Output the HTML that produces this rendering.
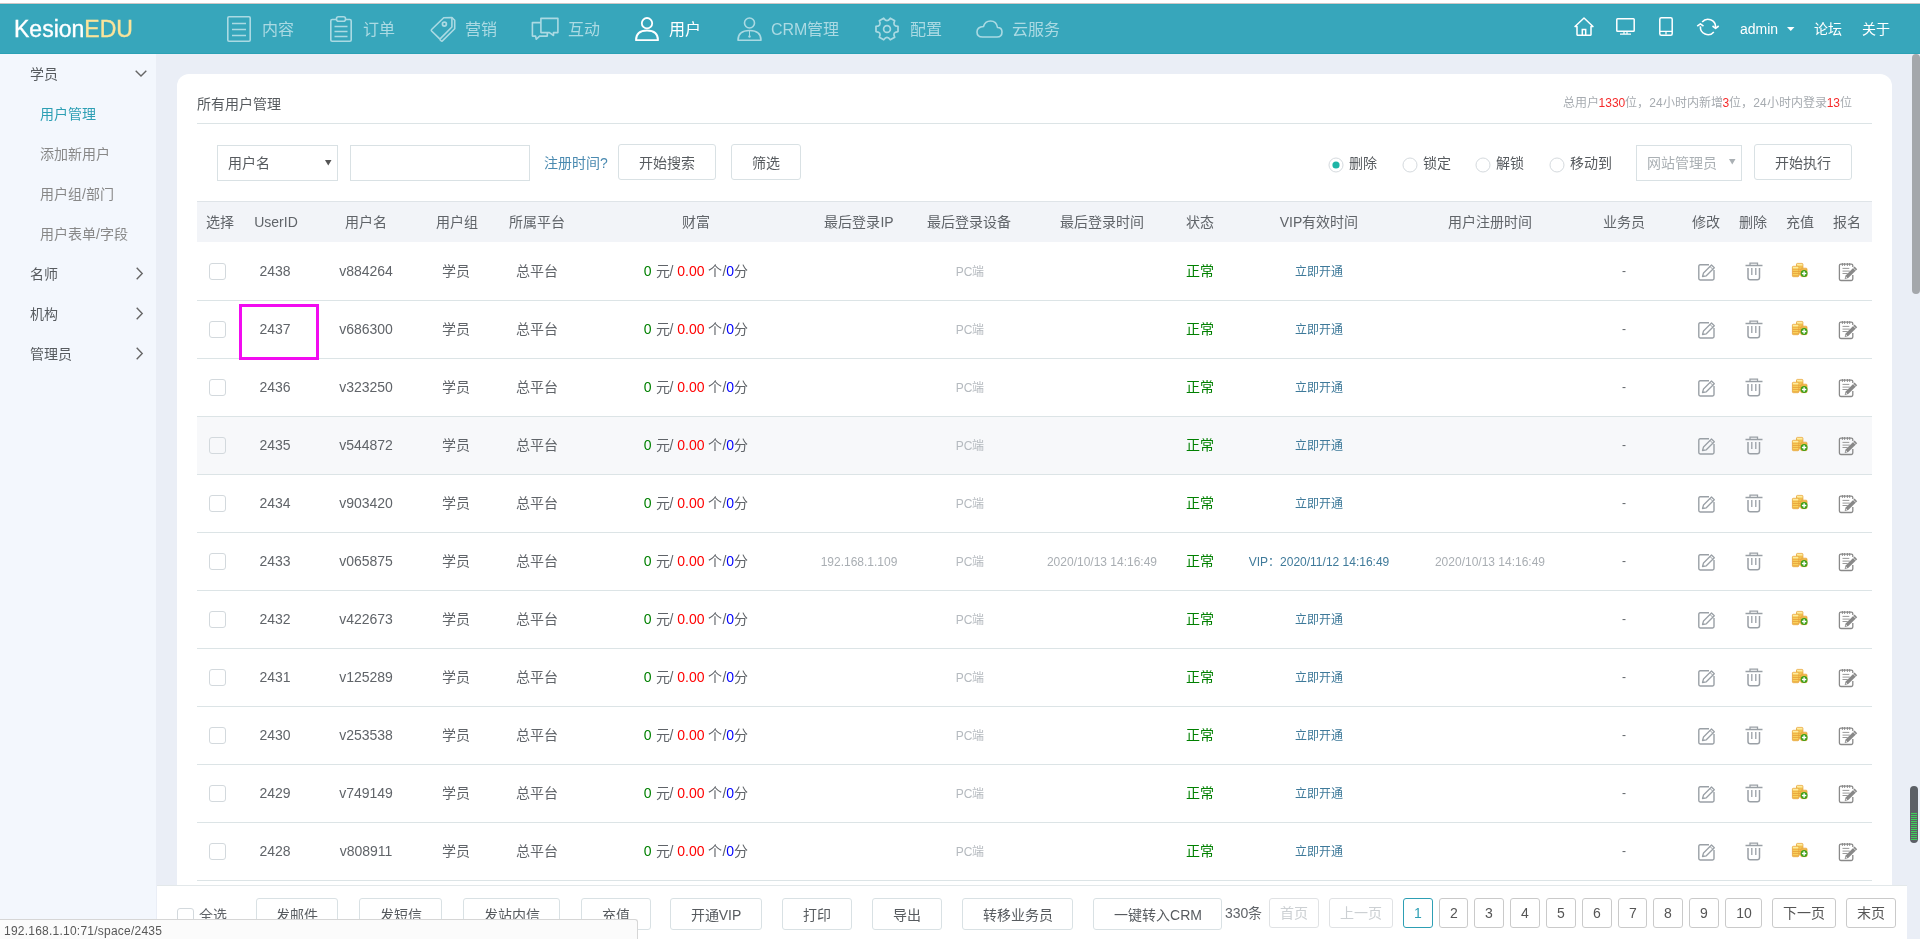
<!DOCTYPE html><html lang="zh-CN"><head><meta charset="utf-8"><style>
html,body{margin:0;padding:0;width:1920px;height:939px;overflow:hidden;background:#eaeef6;font-family:"Liberation Sans", sans-serif;}
.t{position:absolute;white-space:nowrap;-webkit-font-smoothing:antialiased;will-change:transform}
.r{position:absolute;box-sizing:border-box;}
svg{position:absolute;overflow:visible}
</style></head><body>
<div class="r" style="left:0px;top:0px;width:1920px;height:3px;background:#fff"></div>
<div class="r" style="left:0px;top:3px;width:1920px;height:1px;background:#cdc6c6"></div>
<div class="r" style="left:0px;top:4px;width:1920px;height:50px;background:#37a6bb"></div>
<div class="r" style="left:0px;top:4px;width:1920px;height:1px;background:#2ca7ba"></div>
<div class="r" style="left:0px;top:53px;width:1920px;height:1px;background:#2ba1b5"></div>
<div class="r" style="left:0px;top:54px;width:156px;height:885px;background:#f3f7fd"></div>
<div class="t" style="left:14px;top:14px;font-size:23px;line-height:30px;color:#fff;-webkit-text-stroke:0.35px #fff">Kesion<span style="color:#fce49a;-webkit-text-stroke:0.35px #fce49a">EDU</span></div>
<svg style="left:227px;top:16px" width="24" height="26" viewBox="0 0 24 26"><rect x="0.8" y="0.8" width="22.4" height="24.4" rx="1.2" fill="none" stroke="#abdae3" stroke-width="1.6"/><path d="M5 7.5H19M5 13.5H19M5 19.5H19" stroke="#abdae3" stroke-width="1.6"/></svg>
<div class="t" style="left:262px;top:10.0px;font-size:16px;line-height:40px;color:#abdae3;">内容</div>
<svg style="left:330px;top:16px" width="22" height="26" viewBox="0 0 22 26"><path d="M6 3.5H2.2Q0.8 3.5 0.8 5V24Q0.8 25.2 2.2 25.2H19.8Q21.2 25.2 21.2 24V5Q21.2 3.5 19.8 3.5H16" fill="none" stroke="#abdae3" stroke-width="1.6"/><rect x="6.5" y="0.8" width="9" height="4.5" rx="2" fill="none" stroke="#abdae3" stroke-width="1.6"/><path d="M4.5 10.5H17.5M4.5 15.5H17.5M4.5 20.5H17.5" stroke="#abdae3" stroke-width="1.6"/></svg>
<div class="t" style="left:363px;top:10.0px;font-size:16px;line-height:40px;color:#abdae3;">订单</div>
<svg style="left:426px;top:12px" width="34" height="34" viewBox="0 0 34 34"><path d="M5.6 17.5L17.7 5.7L25.9 5.5V15L14.6 26.4Q13.9 27.1 13.2 26.4L5.6 19Q4.9 18.2 5.6 17.5Z" fill="none" stroke="#abdae3" stroke-width="1.6" stroke-linejoin="round"/><path d="M25.9 5.5L28.7 8.3V16.8L16.4 28.9Q15.7 29.5 15 28.8L13.6 27.3" fill="none" stroke="#abdae3" stroke-width="1.6" stroke-linejoin="round"/><circle cx="18.4" cy="12.1" r="2" fill="none" stroke="#abdae3" stroke-width="1.7"/></svg>
<div class="t" style="left:465px;top:10.0px;font-size:16px;line-height:40px;color:#abdae3;">营销</div>
<svg style="left:530px;top:16px" width="30" height="26" viewBox="0 0 30 26"><path d="M10.9 2.4H27.9V16.6H23.5V19.5L19.5 16.6H10.9Z" fill="none" stroke="#abdae3" stroke-width="1.6" stroke-linejoin="round"/><path d="M10.9 6.6H2.4V20.1H5.6L6.3 23.3L9.6 20.1H17.3V16.6" fill="none" stroke="#abdae3" stroke-width="1.6" stroke-linejoin="round"/></svg>
<div class="t" style="left:568px;top:10.0px;font-size:16px;line-height:40px;color:#abdae3;">互动</div>
<svg style="left:635px;top:17px" width="24" height="24" viewBox="0 0 24 24"><circle cx="12" cy="6.2" r="5.2" fill="none" stroke="#fff" stroke-width="1.8"/><path d="M1 23.2Q1 13.5 12 13.5Q23 13.5 23 23.2Z" fill="none" stroke="#fff" stroke-width="1.8" stroke-linejoin="round"/></svg>
<div class="t" style="left:669px;top:10.0px;font-size:16px;line-height:40px;color:#fff;">用户</div>
<svg style="left:737px;top:17px" width="25" height="24" viewBox="0 0 25 24"><circle cx="12.5" cy="6" r="5" fill="none" stroke="#abdae3" stroke-width="1.6"/><path d="M1 23.2Q1 13.5 12.5 13.5Q24 13.5 24 23.2Z" fill="none" stroke="#abdae3" stroke-width="1.6" stroke-linejoin="round"/><path d="M12.5 13.5V19" stroke="#abdae3" stroke-width="1"/><circle cx="12.5" cy="19.5" r="1.2" fill="#abdae3"/></svg>
<div class="t" style="left:771px;top:10.0px;font-size:16px;line-height:40px;color:#abdae3;">CRM管理</div>
<svg style="left:875px;top:17px" width="24" height="24" viewBox="0 0 24 24"><path d="M23.01 9.46L23.01 14.54Q17.11 14.95 19.71 20.26L15.30 22.81Q12.00 17.90 8.70 22.81L4.29 20.26Q6.89 14.95 0.99 14.54L0.99 9.46Q6.89 9.05 4.29 3.74L8.70 1.19Q12.00 6.10 15.30 1.19L19.71 3.74Q17.11 9.05 23.01 9.46Z" fill="none" stroke="#abdae3" stroke-width="1.7" stroke-linejoin="round"/><circle cx="12" cy="12" r="3.4" fill="none" stroke="#abdae3" stroke-width="1.7"/></svg>
<div class="t" style="left:910px;top:10.0px;font-size:16px;line-height:40px;color:#abdae3;">配置</div>
<svg style="left:976px;top:20px" width="27" height="18" viewBox="0 0 27 18"><path d="M6.5 17H21Q26 17 26 12Q26 7.5 21.5 7.5Q20.5 1 14.5 1Q9 1 7.5 6.5Q1 7 1 12Q1 17 6.5 17Z" fill="none" stroke="#abdae3" stroke-width="1.6" stroke-linejoin="round"/></svg>
<div class="t" style="left:1012px;top:10.0px;font-size:16px;line-height:40px;color:#abdae3;">云服务</div>
<svg style="left:1574px;top:17px" width="20" height="19" viewBox="0 0 20 19"><path d="M1 9.5L10 1L19 9.5H17V17.8Q17 18.2 16.6 18.2H3.4Q3 18.2 3 17.8V9.5Z" fill="none" stroke="#fff" stroke-width="1.5" stroke-linejoin="round"/><path d="M8.3 18V12.5H11.7V18" fill="none" stroke="#fff" stroke-width="1.5"/></svg>
<svg style="left:1616px;top:18px" width="19" height="17" viewBox="0 0 19 17"><rect x="0.8" y="0.8" width="17.4" height="12.4" rx="0.8" fill="none" stroke="#fff" stroke-width="1.5"/><path d="M8 13.5V16M11 13.5V16M4 16.2H15" stroke="#fff" stroke-width="1.2"/></svg>
<svg style="left:1659px;top:17px" width="14" height="19" viewBox="0 0 14 19"><rect x="0.8" y="0.8" width="12.4" height="17.4" rx="1.5" fill="none" stroke="#fff" stroke-width="1.5"/><path d="M1 14.3H13M7 14.3V17.5" stroke="#fff" stroke-width="1.2"/></svg>
<svg style="left:1692px;top:14px" width="32" height="26" viewBox="0 0 32 26"><path d="M10.18 8.11A7.6 7.6 0 0 1 23.6 13" fill="none" stroke="#fff" stroke-width="1.6"/><path d="M20.5 12L23.6 14.4L26.7 12" fill="none" stroke="#fff" stroke-width="1.6" stroke-linejoin="round"/><path d="M21.82 17.89A7.6 7.6 0 0 1 8.43 12.34" fill="none" stroke="#fff" stroke-width="1.6"/><path d="M5.2 12.2L8.4 9.8L11.5 12.2" fill="none" stroke="#fff" stroke-width="1.6" stroke-linejoin="round"/></svg>
<div class="t" style="left:1740px;top:9.0px;font-size:14px;line-height:40px;color:#fff;">admin</div>
<svg style="left:1787px;top:27px" width="8" height="4" viewBox="0 0 8 4"><path d="M0 0H7.5L3.75 4Z" fill="#fff"/></svg>
<div class="t" style="left:1814px;top:9.0px;font-size:14px;line-height:40px;color:#fff;">论坛</div>
<div class="t" style="left:1862px;top:9.0px;font-size:14px;line-height:40px;color:#fff;">关于</div>
<div class="t" style="left:30px;top:54.0px;font-size:14px;line-height:40px;color:#575b5f;">学员</div>
<svg style="left:135px;top:70px" width="12" height="7" viewBox="0 0 12 7"><path d="M0.7 0.7L6 6L11.3 0.7" fill="none" stroke="#666" stroke-width="1.4"/></svg>
<div class="t" style="left:40px;top:94.0px;font-size:14px;line-height:40px;color:#2d9fb4;">用户管理</div>
<div class="t" style="left:40px;top:134.0px;font-size:14px;line-height:40px;color:#888;">添加新用户</div>
<div class="t" style="left:40px;top:174.0px;font-size:14px;line-height:40px;color:#888;">用户组/部门</div>
<div class="t" style="left:40px;top:214.0px;font-size:14px;line-height:40px;color:#888;">用户表单/字段</div>
<div class="t" style="left:30px;top:254.0px;font-size:14px;line-height:40px;color:#575b5f;">名师</div>
<svg style="left:136px;top:267px" width="7" height="13" viewBox="0 0 7 13"><path d="M0.7 0.7L6.2 6.5L0.7 12.3" fill="none" stroke="#666" stroke-width="1.4"/></svg>
<div class="t" style="left:30px;top:294.0px;font-size:14px;line-height:40px;color:#575b5f;">机构</div>
<svg style="left:136px;top:307px" width="7" height="13" viewBox="0 0 7 13"><path d="M0.7 0.7L6.2 6.5L0.7 12.3" fill="none" stroke="#666" stroke-width="1.4"/></svg>
<div class="t" style="left:30px;top:334.0px;font-size:14px;line-height:40px;color:#575b5f;">管理员</div>
<svg style="left:136px;top:347px" width="7" height="13" viewBox="0 0 7 13"><path d="M0.7 0.7L6.2 6.5L0.7 12.3" fill="none" stroke="#666" stroke-width="1.4"/></svg>
<div class="r" style="left:177px;top:74px;width:1715px;height:900px;background:#fff;border-radius:12px"></div>
<div class="t" style="left:197px;top:84.0px;font-size:14px;line-height:40px;color:#575b5f;">所有用户管理</div>
<div class="t" style="left:1052px;top:93px;width:800px;text-align:right;font-size:12px;line-height:20px;color:#a6abb0">总用户<span style="color:#f52a2a">1330</span>位，24小时内新增<span style="color:#f52a2a">3</span>位，24小时内登录<span style="color:#f52a2a">13</span>位</div>
<div class="r" style="left:197px;top:123px;width:1675px;height:1px;background:#dce4e6"></div>
<div class="r" style="left:217px;top:145px;width:121px;height:36px;border:1px solid #d9e1e4;background:#fff"></div>
<div class="t" style="left:228px;top:143.0px;font-size:14px;line-height:40px;color:#575b5f;">用户名</div>
<svg style="left:325px;top:160px" width="7" height="6" viewBox="0 0 7 6"><path d="M0 0H6.5L3.25 5.5Z" fill="#555"/></svg>
<div class="r" style="left:350px;top:145px;width:180px;height:36px;border:1px solid #d9e1e4;background:#fff"></div>
<div class="t" style="left:544px;top:143.0px;font-size:14px;line-height:40px;color:#4a8ab0;">注册时间?</div>
<div class="r" style="left:618px;top:144px;width:98px;height:36px;border:1px solid #d9e1e4;border-radius:3px;background:#fff;"></div>
<div class="t" style="left:367.0px;top:142.5px;width:600px;text-align:center;font-size:14px;line-height:40px;color:#575b5f;">开始搜索</div>
<div class="r" style="left:731px;top:144px;width:70px;height:36px;border:1px solid #d9e1e4;border-radius:3px;background:#fff;"></div>
<div class="t" style="left:466.0px;top:142.5px;width:600px;text-align:center;font-size:14px;line-height:40px;color:#575b5f;">筛选</div>
<svg style="left:1327.5px;top:156.5px" width="16" height="16" viewBox="0 0 16 16"><circle cx="8" cy="8" r="7" fill="#fff" stroke="#d5dade" stroke-width="1"/><circle cx="8" cy="8" r="3.6" fill="#1eb5a6"/></svg>
<div class="t" style="left:1349px;top:143.0px;font-size:14px;line-height:40px;color:#575b5f;">删除</div>
<svg style="left:1401.5px;top:156.5px" width="16" height="16" viewBox="0 0 16 16"><circle cx="8" cy="8" r="7" fill="#fff" stroke="#d5dade" stroke-width="1"/></svg>
<div class="t" style="left:1423px;top:143.0px;font-size:14px;line-height:40px;color:#575b5f;">锁定</div>
<svg style="left:1474.5px;top:156.5px" width="16" height="16" viewBox="0 0 16 16"><circle cx="8" cy="8" r="7" fill="#fff" stroke="#d5dade" stroke-width="1"/></svg>
<div class="t" style="left:1496px;top:143.0px;font-size:14px;line-height:40px;color:#575b5f;">解锁</div>
<svg style="left:1548.5px;top:156.5px" width="16" height="16" viewBox="0 0 16 16"><circle cx="8" cy="8" r="7" fill="#fff" stroke="#d5dade" stroke-width="1"/></svg>
<div class="t" style="left:1570px;top:143.0px;font-size:14px;line-height:40px;color:#575b5f;">移动到</div>
<div class="r" style="left:1636px;top:145px;width:106px;height:36px;border:1px solid #d9e1e4;background:#fff"></div>
<div class="t" style="left:1647px;top:143.0px;font-size:14px;line-height:40px;color:#aab0b4;">网站管理员</div>
<svg style="left:1729px;top:159px" width="7" height="6" viewBox="0 0 7 6"><path d="M0 0H6.5L3.25 5.5Z" fill="#aab0b4"/></svg>
<div class="r" style="left:1754px;top:144px;width:98px;height:36px;border:1px solid #d9e1e4;border-radius:3px;background:#fff;"></div>
<div class="t" style="left:1503.0px;top:142.5px;width:600px;text-align:center;font-size:14px;line-height:40px;color:#575b5f;">开始执行</div>
<div class="r" style="left:197px;top:201px;width:1675px;height:41px;background:#f2f4f8;border-top:1px solid #dfe4e8"></div>
<div class="t" style="left:-80px;top:201.5px;width:600px;text-align:center;font-size:14px;line-height:40px;color:#606469;">选择</div>
<div class="t" style="left:-24.5px;top:201.5px;width:600px;text-align:center;font-size:14px;line-height:40px;color:#606469;">UserID</div>
<div class="t" style="left:66px;top:201.5px;width:600px;text-align:center;font-size:14px;line-height:40px;color:#606469;">用户名</div>
<div class="t" style="left:156.60000000000002px;top:201.5px;width:600px;text-align:center;font-size:14px;line-height:40px;color:#606469;">用户组</div>
<div class="t" style="left:237px;top:201.5px;width:600px;text-align:center;font-size:14px;line-height:40px;color:#606469;">所属平台</div>
<div class="t" style="left:396px;top:201.5px;width:600px;text-align:center;font-size:14px;line-height:40px;color:#606469;">财富</div>
<div class="t" style="left:559px;top:201.5px;width:600px;text-align:center;font-size:14px;line-height:40px;color:#606469;">最后登录IP</div>
<div class="t" style="left:669.4px;top:201.5px;width:600px;text-align:center;font-size:14px;line-height:40px;color:#606469;">最后登录设备</div>
<div class="t" style="left:801.8px;top:201.5px;width:600px;text-align:center;font-size:14px;line-height:40px;color:#606469;">最后登录时间</div>
<div class="t" style="left:900px;top:201.5px;width:600px;text-align:center;font-size:14px;line-height:40px;color:#606469;">状态</div>
<div class="t" style="left:1019px;top:201.5px;width:600px;text-align:center;font-size:14px;line-height:40px;color:#606469;">VIP有效时间</div>
<div class="t" style="left:1190px;top:201.5px;width:600px;text-align:center;font-size:14px;line-height:40px;color:#606469;">用户注册时间</div>
<div class="t" style="left:1323.8px;top:201.5px;width:600px;text-align:center;font-size:14px;line-height:40px;color:#606469;">业务员</div>
<div class="t" style="left:1406.3px;top:201.5px;width:600px;text-align:center;font-size:14px;line-height:40px;color:#606469;">修改</div>
<div class="t" style="left:1453.3px;top:201.5px;width:600px;text-align:center;font-size:14px;line-height:40px;color:#606469;">删除</div>
<div class="t" style="left:1500.3px;top:201.5px;width:600px;text-align:center;font-size:14px;line-height:40px;color:#606469;">充值</div>
<div class="t" style="left:1547.4px;top:201.5px;width:600px;text-align:center;font-size:14px;line-height:40px;color:#606469;">报名</div>
<div class="r" style="left:197px;top:300px;width:1675px;height:1px;background:#dce4e6"></div>
<div class="r" style="left:209px;top:263px;width:17px;height:17px;border:1px solid #d3d9dd;border-radius:3px;background:transparent"></div>
<div class="t" style="left:-24.600000000000023px;top:251.0px;width:600px;text-align:center;font-size:14px;line-height:40px;color:#606469;">2438</div>
<div class="t" style="left:66.39999999999998px;top:251.0px;width:600px;text-align:center;font-size:14px;line-height:40px;color:#606469;">v884264</div>
<div class="t" style="left:156px;top:251.0px;width:600px;text-align:center;font-size:14px;line-height:40px;color:#606469;">学员</div>
<div class="t" style="left:237px;top:251.0px;width:600px;text-align:center;font-size:14px;line-height:40px;color:#606469;">总平台</div>
<div class="t" style="left:396px;top:251.0px;width:600px;text-align:center;font-size:14px;line-height:40px;color:#606469;"><span style="color:#008000">0</span> 元/ <span style="color:#ff0000">0.00</span> 个/<span style="color:#0000ff">0</span>分</div>
<div class="t" style="left:669.5px;top:252.0px;width:600px;text-align:center;font-size:12px;line-height:40px;color:#b5babf;">PC端</div>
<div class="t" style="left:900px;top:251.0px;width:600px;text-align:center;font-size:14px;line-height:40px;color:#008000;">正常</div>
<div class="t" style="left:1019px;top:252.0px;width:600px;text-align:center;font-size:12px;line-height:40px;color:#3f7a9a;">立即开通</div>
<div class="t" style="left:1323.8px;top:251.0px;width:600px;text-align:center;font-size:12px;line-height:40px;color:#606469;">-</div>
<svg style="left:1698px;top:263.5px" width="18" height="17" viewBox="0 0 18 17"><path d="M11 0.8H2.2Q0.8 0.8 0.8 2.2V14.6Q0.8 16 2.2 16H14.6Q16 16 16 14.6V6" fill="none" stroke="#9aa0a6" stroke-width="1.4"/><path d="M4.5 12.5L5.5 9L13.5 1L16.3 3.8L8.3 11.8Z" fill="none" stroke="#9aa0a6" stroke-width="1.3" stroke-linejoin="round"/><path d="M12 2.5L14.8 5.3" stroke="#9aa0a6" stroke-width="1"/></svg>
<svg style="left:1745px;top:262px" width="18" height="19" viewBox="0 0 18 19"><path d="M0.5 3.5H17.5" stroke="#9aa0a6" stroke-width="1.5"/><path d="M5 3.5V1.2H12.5V3.5" fill="none" stroke="#9aa0a6" stroke-width="1.3"/><path d="M3 6V15.5Q3 17.8 5.3 17.8H12.2Q14.5 17.8 14.5 15.5V6" fill="none" stroke="#9aa0a6" stroke-width="1.5"/><path d="M6.8 6V13M10.8 6V13" stroke="#9aa0a6" stroke-width="1.3"/></svg>
<svg style="left:1792px;top:263px" width="16" height="15" viewBox="0 0 16 15"><defs><pattern id="cs271" width="4" height="2.2" patternUnits="userSpaceOnUse"><rect width="4" height="2.2" fill="#f9d45e"/><rect y="1.3" width="4" height="0.9" fill="#e9a43c"/></pattern></defs><rect x="4.5" y="0.4" width="6.4" height="11.4" rx="0.9" fill="url(#cs271)" stroke="#e6a13a" stroke-width="0.8"/><rect x="4.9" y="0.8" width="5.6" height="1.6" fill="#fdeca0"/><rect x="8.8" y="5.2" width="6.2" height="8.4" rx="0.9" fill="url(#cs271)" stroke="#e6a13a" stroke-width="0.8"/><rect x="0.4" y="3.3" width="6.4" height="10.4" rx="0.9" fill="url(#cs271)" stroke="#e6a13a" stroke-width="0.8"/><rect x="0.8" y="3.7" width="5.6" height="1.6" fill="#fdeca0"/><circle cx="12.1" cy="10.5" r="3.4" fill="#3a9e16"/><path d="M12.1 8.3V12.7M9.9 10.5H14.3" stroke="#fff" stroke-width="1.4"/></svg>
<svg style="left:1834px;top:258px" width="28" height="28" viewBox="0 0 28 28"><path d="M18.8 9V7.6Q18.8 6.2 17.4 6.2H6.8Q5.4 6.2 5.4 7.6V21.1Q5.4 22.5 6.8 22.5H17.4Q18.8 22.5 18.8 21.1V17" fill="none" stroke="#8a8a8a" stroke-width="1.3"/><path d="M8.4 5V7.9M10.6 5V7.9M13.4 5V7.9M15.7 5V7.9" stroke="#8a8a8a" stroke-width="1"/><path d="M8.5 10.4H15.3M8.5 13.1H15.8M8.5 15.5H13.7" stroke="#999" stroke-width="1"/><path d="M10.6 20.9L11.6 17.4L20.6 8.6L23.2 11.2L14.2 20Z" fill="#888"/><path d="M19.3 10L21.8 12.5" stroke="#fff" stroke-width="0.7"/><circle cx="12.3" cy="19.3" r="0.6" fill="#fff"/></svg>
<div class="r" style="left:197px;top:358px;width:1675px;height:1px;background:#dce4e6"></div>
<div class="r" style="left:209px;top:321px;width:17px;height:17px;border:1px solid #d3d9dd;border-radius:3px;background:transparent"></div>
<div class="t" style="left:-24.600000000000023px;top:309.0px;width:600px;text-align:center;font-size:14px;line-height:40px;color:#606469;">2437</div>
<div class="t" style="left:66.39999999999998px;top:309.0px;width:600px;text-align:center;font-size:14px;line-height:40px;color:#606469;">v686300</div>
<div class="t" style="left:156px;top:309.0px;width:600px;text-align:center;font-size:14px;line-height:40px;color:#606469;">学员</div>
<div class="t" style="left:237px;top:309.0px;width:600px;text-align:center;font-size:14px;line-height:40px;color:#606469;">总平台</div>
<div class="t" style="left:396px;top:309.0px;width:600px;text-align:center;font-size:14px;line-height:40px;color:#606469;"><span style="color:#008000">0</span> 元/ <span style="color:#ff0000">0.00</span> 个/<span style="color:#0000ff">0</span>分</div>
<div class="t" style="left:669.5px;top:310.0px;width:600px;text-align:center;font-size:12px;line-height:40px;color:#b5babf;">PC端</div>
<div class="t" style="left:900px;top:309.0px;width:600px;text-align:center;font-size:14px;line-height:40px;color:#008000;">正常</div>
<div class="t" style="left:1019px;top:310.0px;width:600px;text-align:center;font-size:12px;line-height:40px;color:#3f7a9a;">立即开通</div>
<div class="t" style="left:1323.8px;top:309.0px;width:600px;text-align:center;font-size:12px;line-height:40px;color:#606469;">-</div>
<svg style="left:1698px;top:321.5px" width="18" height="17" viewBox="0 0 18 17"><path d="M11 0.8H2.2Q0.8 0.8 0.8 2.2V14.6Q0.8 16 2.2 16H14.6Q16 16 16 14.6V6" fill="none" stroke="#9aa0a6" stroke-width="1.4"/><path d="M4.5 12.5L5.5 9L13.5 1L16.3 3.8L8.3 11.8Z" fill="none" stroke="#9aa0a6" stroke-width="1.3" stroke-linejoin="round"/><path d="M12 2.5L14.8 5.3" stroke="#9aa0a6" stroke-width="1"/></svg>
<svg style="left:1745px;top:320px" width="18" height="19" viewBox="0 0 18 19"><path d="M0.5 3.5H17.5" stroke="#9aa0a6" stroke-width="1.5"/><path d="M5 3.5V1.2H12.5V3.5" fill="none" stroke="#9aa0a6" stroke-width="1.3"/><path d="M3 6V15.5Q3 17.8 5.3 17.8H12.2Q14.5 17.8 14.5 15.5V6" fill="none" stroke="#9aa0a6" stroke-width="1.5"/><path d="M6.8 6V13M10.8 6V13" stroke="#9aa0a6" stroke-width="1.3"/></svg>
<svg style="left:1792px;top:321px" width="16" height="15" viewBox="0 0 16 15"><defs><pattern id="cs329" width="4" height="2.2" patternUnits="userSpaceOnUse"><rect width="4" height="2.2" fill="#f9d45e"/><rect y="1.3" width="4" height="0.9" fill="#e9a43c"/></pattern></defs><rect x="4.5" y="0.4" width="6.4" height="11.4" rx="0.9" fill="url(#cs329)" stroke="#e6a13a" stroke-width="0.8"/><rect x="4.9" y="0.8" width="5.6" height="1.6" fill="#fdeca0"/><rect x="8.8" y="5.2" width="6.2" height="8.4" rx="0.9" fill="url(#cs329)" stroke="#e6a13a" stroke-width="0.8"/><rect x="0.4" y="3.3" width="6.4" height="10.4" rx="0.9" fill="url(#cs329)" stroke="#e6a13a" stroke-width="0.8"/><rect x="0.8" y="3.7" width="5.6" height="1.6" fill="#fdeca0"/><circle cx="12.1" cy="10.5" r="3.4" fill="#3a9e16"/><path d="M12.1 8.3V12.7M9.9 10.5H14.3" stroke="#fff" stroke-width="1.4"/></svg>
<svg style="left:1834px;top:316px" width="28" height="28" viewBox="0 0 28 28"><path d="M18.8 9V7.6Q18.8 6.2 17.4 6.2H6.8Q5.4 6.2 5.4 7.6V21.1Q5.4 22.5 6.8 22.5H17.4Q18.8 22.5 18.8 21.1V17" fill="none" stroke="#8a8a8a" stroke-width="1.3"/><path d="M8.4 5V7.9M10.6 5V7.9M13.4 5V7.9M15.7 5V7.9" stroke="#8a8a8a" stroke-width="1"/><path d="M8.5 10.4H15.3M8.5 13.1H15.8M8.5 15.5H13.7" stroke="#999" stroke-width="1"/><path d="M10.6 20.9L11.6 17.4L20.6 8.6L23.2 11.2L14.2 20Z" fill="#888"/><path d="M19.3 10L21.8 12.5" stroke="#fff" stroke-width="0.7"/><circle cx="12.3" cy="19.3" r="0.6" fill="#fff"/></svg>
<div class="r" style="left:197px;top:416px;width:1675px;height:1px;background:#dce4e6"></div>
<div class="r" style="left:209px;top:379px;width:17px;height:17px;border:1px solid #d3d9dd;border-radius:3px;background:transparent"></div>
<div class="t" style="left:-24.600000000000023px;top:367.0px;width:600px;text-align:center;font-size:14px;line-height:40px;color:#606469;">2436</div>
<div class="t" style="left:66.39999999999998px;top:367.0px;width:600px;text-align:center;font-size:14px;line-height:40px;color:#606469;">v323250</div>
<div class="t" style="left:156px;top:367.0px;width:600px;text-align:center;font-size:14px;line-height:40px;color:#606469;">学员</div>
<div class="t" style="left:237px;top:367.0px;width:600px;text-align:center;font-size:14px;line-height:40px;color:#606469;">总平台</div>
<div class="t" style="left:396px;top:367.0px;width:600px;text-align:center;font-size:14px;line-height:40px;color:#606469;"><span style="color:#008000">0</span> 元/ <span style="color:#ff0000">0.00</span> 个/<span style="color:#0000ff">0</span>分</div>
<div class="t" style="left:669.5px;top:368.0px;width:600px;text-align:center;font-size:12px;line-height:40px;color:#b5babf;">PC端</div>
<div class="t" style="left:900px;top:367.0px;width:600px;text-align:center;font-size:14px;line-height:40px;color:#008000;">正常</div>
<div class="t" style="left:1019px;top:368.0px;width:600px;text-align:center;font-size:12px;line-height:40px;color:#3f7a9a;">立即开通</div>
<div class="t" style="left:1323.8px;top:367.0px;width:600px;text-align:center;font-size:12px;line-height:40px;color:#606469;">-</div>
<svg style="left:1698px;top:379.5px" width="18" height="17" viewBox="0 0 18 17"><path d="M11 0.8H2.2Q0.8 0.8 0.8 2.2V14.6Q0.8 16 2.2 16H14.6Q16 16 16 14.6V6" fill="none" stroke="#9aa0a6" stroke-width="1.4"/><path d="M4.5 12.5L5.5 9L13.5 1L16.3 3.8L8.3 11.8Z" fill="none" stroke="#9aa0a6" stroke-width="1.3" stroke-linejoin="round"/><path d="M12 2.5L14.8 5.3" stroke="#9aa0a6" stroke-width="1"/></svg>
<svg style="left:1745px;top:378px" width="18" height="19" viewBox="0 0 18 19"><path d="M0.5 3.5H17.5" stroke="#9aa0a6" stroke-width="1.5"/><path d="M5 3.5V1.2H12.5V3.5" fill="none" stroke="#9aa0a6" stroke-width="1.3"/><path d="M3 6V15.5Q3 17.8 5.3 17.8H12.2Q14.5 17.8 14.5 15.5V6" fill="none" stroke="#9aa0a6" stroke-width="1.5"/><path d="M6.8 6V13M10.8 6V13" stroke="#9aa0a6" stroke-width="1.3"/></svg>
<svg style="left:1792px;top:379px" width="16" height="15" viewBox="0 0 16 15"><defs><pattern id="cs387" width="4" height="2.2" patternUnits="userSpaceOnUse"><rect width="4" height="2.2" fill="#f9d45e"/><rect y="1.3" width="4" height="0.9" fill="#e9a43c"/></pattern></defs><rect x="4.5" y="0.4" width="6.4" height="11.4" rx="0.9" fill="url(#cs387)" stroke="#e6a13a" stroke-width="0.8"/><rect x="4.9" y="0.8" width="5.6" height="1.6" fill="#fdeca0"/><rect x="8.8" y="5.2" width="6.2" height="8.4" rx="0.9" fill="url(#cs387)" stroke="#e6a13a" stroke-width="0.8"/><rect x="0.4" y="3.3" width="6.4" height="10.4" rx="0.9" fill="url(#cs387)" stroke="#e6a13a" stroke-width="0.8"/><rect x="0.8" y="3.7" width="5.6" height="1.6" fill="#fdeca0"/><circle cx="12.1" cy="10.5" r="3.4" fill="#3a9e16"/><path d="M12.1 8.3V12.7M9.9 10.5H14.3" stroke="#fff" stroke-width="1.4"/></svg>
<svg style="left:1834px;top:374px" width="28" height="28" viewBox="0 0 28 28"><path d="M18.8 9V7.6Q18.8 6.2 17.4 6.2H6.8Q5.4 6.2 5.4 7.6V21.1Q5.4 22.5 6.8 22.5H17.4Q18.8 22.5 18.8 21.1V17" fill="none" stroke="#8a8a8a" stroke-width="1.3"/><path d="M8.4 5V7.9M10.6 5V7.9M13.4 5V7.9M15.7 5V7.9" stroke="#8a8a8a" stroke-width="1"/><path d="M8.5 10.4H15.3M8.5 13.1H15.8M8.5 15.5H13.7" stroke="#999" stroke-width="1"/><path d="M10.6 20.9L11.6 17.4L20.6 8.6L23.2 11.2L14.2 20Z" fill="#888"/><path d="M19.3 10L21.8 12.5" stroke="#fff" stroke-width="0.7"/><circle cx="12.3" cy="19.3" r="0.6" fill="#fff"/></svg>
<div class="r" style="left:197px;top:417px;width:1675px;height:57px;background:#f7f8fa"></div>
<div class="r" style="left:197px;top:474px;width:1675px;height:1px;background:#dce4e6"></div>
<div class="r" style="left:209px;top:437px;width:17px;height:17px;border:1px solid #d3d9dd;border-radius:3px;background:transparent"></div>
<div class="t" style="left:-24.600000000000023px;top:425.0px;width:600px;text-align:center;font-size:14px;line-height:40px;color:#606469;">2435</div>
<div class="t" style="left:66.39999999999998px;top:425.0px;width:600px;text-align:center;font-size:14px;line-height:40px;color:#606469;">v544872</div>
<div class="t" style="left:156px;top:425.0px;width:600px;text-align:center;font-size:14px;line-height:40px;color:#606469;">学员</div>
<div class="t" style="left:237px;top:425.0px;width:600px;text-align:center;font-size:14px;line-height:40px;color:#606469;">总平台</div>
<div class="t" style="left:396px;top:425.0px;width:600px;text-align:center;font-size:14px;line-height:40px;color:#606469;"><span style="color:#008000">0</span> 元/ <span style="color:#ff0000">0.00</span> 个/<span style="color:#0000ff">0</span>分</div>
<div class="t" style="left:669.5px;top:426.0px;width:600px;text-align:center;font-size:12px;line-height:40px;color:#b5babf;">PC端</div>
<div class="t" style="left:900px;top:425.0px;width:600px;text-align:center;font-size:14px;line-height:40px;color:#008000;">正常</div>
<div class="t" style="left:1019px;top:426.0px;width:600px;text-align:center;font-size:12px;line-height:40px;color:#3f7a9a;">立即开通</div>
<div class="t" style="left:1323.8px;top:425.0px;width:600px;text-align:center;font-size:12px;line-height:40px;color:#606469;">-</div>
<svg style="left:1698px;top:437.5px" width="18" height="17" viewBox="0 0 18 17"><path d="M11 0.8H2.2Q0.8 0.8 0.8 2.2V14.6Q0.8 16 2.2 16H14.6Q16 16 16 14.6V6" fill="none" stroke="#9aa0a6" stroke-width="1.4"/><path d="M4.5 12.5L5.5 9L13.5 1L16.3 3.8L8.3 11.8Z" fill="none" stroke="#9aa0a6" stroke-width="1.3" stroke-linejoin="round"/><path d="M12 2.5L14.8 5.3" stroke="#9aa0a6" stroke-width="1"/></svg>
<svg style="left:1745px;top:436px" width="18" height="19" viewBox="0 0 18 19"><path d="M0.5 3.5H17.5" stroke="#9aa0a6" stroke-width="1.5"/><path d="M5 3.5V1.2H12.5V3.5" fill="none" stroke="#9aa0a6" stroke-width="1.3"/><path d="M3 6V15.5Q3 17.8 5.3 17.8H12.2Q14.5 17.8 14.5 15.5V6" fill="none" stroke="#9aa0a6" stroke-width="1.5"/><path d="M6.8 6V13M10.8 6V13" stroke="#9aa0a6" stroke-width="1.3"/></svg>
<svg style="left:1792px;top:437px" width="16" height="15" viewBox="0 0 16 15"><defs><pattern id="cs445" width="4" height="2.2" patternUnits="userSpaceOnUse"><rect width="4" height="2.2" fill="#f9d45e"/><rect y="1.3" width="4" height="0.9" fill="#e9a43c"/></pattern></defs><rect x="4.5" y="0.4" width="6.4" height="11.4" rx="0.9" fill="url(#cs445)" stroke="#e6a13a" stroke-width="0.8"/><rect x="4.9" y="0.8" width="5.6" height="1.6" fill="#fdeca0"/><rect x="8.8" y="5.2" width="6.2" height="8.4" rx="0.9" fill="url(#cs445)" stroke="#e6a13a" stroke-width="0.8"/><rect x="0.4" y="3.3" width="6.4" height="10.4" rx="0.9" fill="url(#cs445)" stroke="#e6a13a" stroke-width="0.8"/><rect x="0.8" y="3.7" width="5.6" height="1.6" fill="#fdeca0"/><circle cx="12.1" cy="10.5" r="3.4" fill="#3a9e16"/><path d="M12.1 8.3V12.7M9.9 10.5H14.3" stroke="#fff" stroke-width="1.4"/></svg>
<svg style="left:1834px;top:432px" width="28" height="28" viewBox="0 0 28 28"><path d="M18.8 9V7.6Q18.8 6.2 17.4 6.2H6.8Q5.4 6.2 5.4 7.6V21.1Q5.4 22.5 6.8 22.5H17.4Q18.8 22.5 18.8 21.1V17" fill="none" stroke="#8a8a8a" stroke-width="1.3"/><path d="M8.4 5V7.9M10.6 5V7.9M13.4 5V7.9M15.7 5V7.9" stroke="#8a8a8a" stroke-width="1"/><path d="M8.5 10.4H15.3M8.5 13.1H15.8M8.5 15.5H13.7" stroke="#999" stroke-width="1"/><path d="M10.6 20.9L11.6 17.4L20.6 8.6L23.2 11.2L14.2 20Z" fill="#888"/><path d="M19.3 10L21.8 12.5" stroke="#fff" stroke-width="0.7"/><circle cx="12.3" cy="19.3" r="0.6" fill="#fff"/></svg>
<div class="r" style="left:197px;top:532px;width:1675px;height:1px;background:#dce4e6"></div>
<div class="r" style="left:209px;top:495px;width:17px;height:17px;border:1px solid #d3d9dd;border-radius:3px;background:transparent"></div>
<div class="t" style="left:-24.600000000000023px;top:483.0px;width:600px;text-align:center;font-size:14px;line-height:40px;color:#606469;">2434</div>
<div class="t" style="left:66.39999999999998px;top:483.0px;width:600px;text-align:center;font-size:14px;line-height:40px;color:#606469;">v903420</div>
<div class="t" style="left:156px;top:483.0px;width:600px;text-align:center;font-size:14px;line-height:40px;color:#606469;">学员</div>
<div class="t" style="left:237px;top:483.0px;width:600px;text-align:center;font-size:14px;line-height:40px;color:#606469;">总平台</div>
<div class="t" style="left:396px;top:483.0px;width:600px;text-align:center;font-size:14px;line-height:40px;color:#606469;"><span style="color:#008000">0</span> 元/ <span style="color:#ff0000">0.00</span> 个/<span style="color:#0000ff">0</span>分</div>
<div class="t" style="left:669.5px;top:484.0px;width:600px;text-align:center;font-size:12px;line-height:40px;color:#b5babf;">PC端</div>
<div class="t" style="left:900px;top:483.0px;width:600px;text-align:center;font-size:14px;line-height:40px;color:#008000;">正常</div>
<div class="t" style="left:1019px;top:484.0px;width:600px;text-align:center;font-size:12px;line-height:40px;color:#3f7a9a;">立即开通</div>
<div class="t" style="left:1323.8px;top:483.0px;width:600px;text-align:center;font-size:12px;line-height:40px;color:#606469;">-</div>
<svg style="left:1698px;top:495.5px" width="18" height="17" viewBox="0 0 18 17"><path d="M11 0.8H2.2Q0.8 0.8 0.8 2.2V14.6Q0.8 16 2.2 16H14.6Q16 16 16 14.6V6" fill="none" stroke="#9aa0a6" stroke-width="1.4"/><path d="M4.5 12.5L5.5 9L13.5 1L16.3 3.8L8.3 11.8Z" fill="none" stroke="#9aa0a6" stroke-width="1.3" stroke-linejoin="round"/><path d="M12 2.5L14.8 5.3" stroke="#9aa0a6" stroke-width="1"/></svg>
<svg style="left:1745px;top:494px" width="18" height="19" viewBox="0 0 18 19"><path d="M0.5 3.5H17.5" stroke="#9aa0a6" stroke-width="1.5"/><path d="M5 3.5V1.2H12.5V3.5" fill="none" stroke="#9aa0a6" stroke-width="1.3"/><path d="M3 6V15.5Q3 17.8 5.3 17.8H12.2Q14.5 17.8 14.5 15.5V6" fill="none" stroke="#9aa0a6" stroke-width="1.5"/><path d="M6.8 6V13M10.8 6V13" stroke="#9aa0a6" stroke-width="1.3"/></svg>
<svg style="left:1792px;top:495px" width="16" height="15" viewBox="0 0 16 15"><defs><pattern id="cs503" width="4" height="2.2" patternUnits="userSpaceOnUse"><rect width="4" height="2.2" fill="#f9d45e"/><rect y="1.3" width="4" height="0.9" fill="#e9a43c"/></pattern></defs><rect x="4.5" y="0.4" width="6.4" height="11.4" rx="0.9" fill="url(#cs503)" stroke="#e6a13a" stroke-width="0.8"/><rect x="4.9" y="0.8" width="5.6" height="1.6" fill="#fdeca0"/><rect x="8.8" y="5.2" width="6.2" height="8.4" rx="0.9" fill="url(#cs503)" stroke="#e6a13a" stroke-width="0.8"/><rect x="0.4" y="3.3" width="6.4" height="10.4" rx="0.9" fill="url(#cs503)" stroke="#e6a13a" stroke-width="0.8"/><rect x="0.8" y="3.7" width="5.6" height="1.6" fill="#fdeca0"/><circle cx="12.1" cy="10.5" r="3.4" fill="#3a9e16"/><path d="M12.1 8.3V12.7M9.9 10.5H14.3" stroke="#fff" stroke-width="1.4"/></svg>
<svg style="left:1834px;top:490px" width="28" height="28" viewBox="0 0 28 28"><path d="M18.8 9V7.6Q18.8 6.2 17.4 6.2H6.8Q5.4 6.2 5.4 7.6V21.1Q5.4 22.5 6.8 22.5H17.4Q18.8 22.5 18.8 21.1V17" fill="none" stroke="#8a8a8a" stroke-width="1.3"/><path d="M8.4 5V7.9M10.6 5V7.9M13.4 5V7.9M15.7 5V7.9" stroke="#8a8a8a" stroke-width="1"/><path d="M8.5 10.4H15.3M8.5 13.1H15.8M8.5 15.5H13.7" stroke="#999" stroke-width="1"/><path d="M10.6 20.9L11.6 17.4L20.6 8.6L23.2 11.2L14.2 20Z" fill="#888"/><path d="M19.3 10L21.8 12.5" stroke="#fff" stroke-width="0.7"/><circle cx="12.3" cy="19.3" r="0.6" fill="#fff"/></svg>
<div class="r" style="left:197px;top:590px;width:1675px;height:1px;background:#dce4e6"></div>
<div class="r" style="left:209px;top:553px;width:17px;height:17px;border:1px solid #d3d9dd;border-radius:3px;background:transparent"></div>
<div class="t" style="left:-24.600000000000023px;top:541.0px;width:600px;text-align:center;font-size:14px;line-height:40px;color:#606469;">2433</div>
<div class="t" style="left:66.39999999999998px;top:541.0px;width:600px;text-align:center;font-size:14px;line-height:40px;color:#606469;">v065875</div>
<div class="t" style="left:156px;top:541.0px;width:600px;text-align:center;font-size:14px;line-height:40px;color:#606469;">学员</div>
<div class="t" style="left:237px;top:541.0px;width:600px;text-align:center;font-size:14px;line-height:40px;color:#606469;">总平台</div>
<div class="t" style="left:396px;top:541.0px;width:600px;text-align:center;font-size:14px;line-height:40px;color:#606469;"><span style="color:#008000">0</span> 元/ <span style="color:#ff0000">0.00</span> 个/<span style="color:#0000ff">0</span>分</div>
<div class="t" style="left:669.5px;top:542.0px;width:600px;text-align:center;font-size:12px;line-height:40px;color:#b5babf;">PC端</div>
<div class="t" style="left:900px;top:541.0px;width:600px;text-align:center;font-size:14px;line-height:40px;color:#008000;">正常</div>
<div class="t" style="left:559px;top:541.5px;width:600px;text-align:center;font-size:12px;line-height:40px;color:#a9aeb3;">192.168.1.109</div>
<div class="t" style="left:801.8px;top:541.5px;width:600px;text-align:center;font-size:12px;line-height:40px;color:#a9aeb3;">2020/10/13 14:16:49</div>
<div class="t" style="left:1019px;top:542.0px;width:600px;text-align:center;font-size:12px;line-height:40px;color:#3f7a9a;">VIP：2020/11/12 14:16:49</div>
<div class="t" style="left:1189.7px;top:541.5px;width:600px;text-align:center;font-size:12px;line-height:40px;color:#a9aeb3;">2020/10/13 14:16:49</div>
<div class="t" style="left:1323.8px;top:541.0px;width:600px;text-align:center;font-size:12px;line-height:40px;color:#606469;">-</div>
<svg style="left:1698px;top:553.5px" width="18" height="17" viewBox="0 0 18 17"><path d="M11 0.8H2.2Q0.8 0.8 0.8 2.2V14.6Q0.8 16 2.2 16H14.6Q16 16 16 14.6V6" fill="none" stroke="#9aa0a6" stroke-width="1.4"/><path d="M4.5 12.5L5.5 9L13.5 1L16.3 3.8L8.3 11.8Z" fill="none" stroke="#9aa0a6" stroke-width="1.3" stroke-linejoin="round"/><path d="M12 2.5L14.8 5.3" stroke="#9aa0a6" stroke-width="1"/></svg>
<svg style="left:1745px;top:552px" width="18" height="19" viewBox="0 0 18 19"><path d="M0.5 3.5H17.5" stroke="#9aa0a6" stroke-width="1.5"/><path d="M5 3.5V1.2H12.5V3.5" fill="none" stroke="#9aa0a6" stroke-width="1.3"/><path d="M3 6V15.5Q3 17.8 5.3 17.8H12.2Q14.5 17.8 14.5 15.5V6" fill="none" stroke="#9aa0a6" stroke-width="1.5"/><path d="M6.8 6V13M10.8 6V13" stroke="#9aa0a6" stroke-width="1.3"/></svg>
<svg style="left:1792px;top:553px" width="16" height="15" viewBox="0 0 16 15"><defs><pattern id="cs561" width="4" height="2.2" patternUnits="userSpaceOnUse"><rect width="4" height="2.2" fill="#f9d45e"/><rect y="1.3" width="4" height="0.9" fill="#e9a43c"/></pattern></defs><rect x="4.5" y="0.4" width="6.4" height="11.4" rx="0.9" fill="url(#cs561)" stroke="#e6a13a" stroke-width="0.8"/><rect x="4.9" y="0.8" width="5.6" height="1.6" fill="#fdeca0"/><rect x="8.8" y="5.2" width="6.2" height="8.4" rx="0.9" fill="url(#cs561)" stroke="#e6a13a" stroke-width="0.8"/><rect x="0.4" y="3.3" width="6.4" height="10.4" rx="0.9" fill="url(#cs561)" stroke="#e6a13a" stroke-width="0.8"/><rect x="0.8" y="3.7" width="5.6" height="1.6" fill="#fdeca0"/><circle cx="12.1" cy="10.5" r="3.4" fill="#3a9e16"/><path d="M12.1 8.3V12.7M9.9 10.5H14.3" stroke="#fff" stroke-width="1.4"/></svg>
<svg style="left:1834px;top:548px" width="28" height="28" viewBox="0 0 28 28"><path d="M18.8 9V7.6Q18.8 6.2 17.4 6.2H6.8Q5.4 6.2 5.4 7.6V21.1Q5.4 22.5 6.8 22.5H17.4Q18.8 22.5 18.8 21.1V17" fill="none" stroke="#8a8a8a" stroke-width="1.3"/><path d="M8.4 5V7.9M10.6 5V7.9M13.4 5V7.9M15.7 5V7.9" stroke="#8a8a8a" stroke-width="1"/><path d="M8.5 10.4H15.3M8.5 13.1H15.8M8.5 15.5H13.7" stroke="#999" stroke-width="1"/><path d="M10.6 20.9L11.6 17.4L20.6 8.6L23.2 11.2L14.2 20Z" fill="#888"/><path d="M19.3 10L21.8 12.5" stroke="#fff" stroke-width="0.7"/><circle cx="12.3" cy="19.3" r="0.6" fill="#fff"/></svg>
<div class="r" style="left:197px;top:648px;width:1675px;height:1px;background:#dce4e6"></div>
<div class="r" style="left:209px;top:611px;width:17px;height:17px;border:1px solid #d3d9dd;border-radius:3px;background:transparent"></div>
<div class="t" style="left:-24.600000000000023px;top:599.0px;width:600px;text-align:center;font-size:14px;line-height:40px;color:#606469;">2432</div>
<div class="t" style="left:66.39999999999998px;top:599.0px;width:600px;text-align:center;font-size:14px;line-height:40px;color:#606469;">v422673</div>
<div class="t" style="left:156px;top:599.0px;width:600px;text-align:center;font-size:14px;line-height:40px;color:#606469;">学员</div>
<div class="t" style="left:237px;top:599.0px;width:600px;text-align:center;font-size:14px;line-height:40px;color:#606469;">总平台</div>
<div class="t" style="left:396px;top:599.0px;width:600px;text-align:center;font-size:14px;line-height:40px;color:#606469;"><span style="color:#008000">0</span> 元/ <span style="color:#ff0000">0.00</span> 个/<span style="color:#0000ff">0</span>分</div>
<div class="t" style="left:669.5px;top:600.0px;width:600px;text-align:center;font-size:12px;line-height:40px;color:#b5babf;">PC端</div>
<div class="t" style="left:900px;top:599.0px;width:600px;text-align:center;font-size:14px;line-height:40px;color:#008000;">正常</div>
<div class="t" style="left:1019px;top:600.0px;width:600px;text-align:center;font-size:12px;line-height:40px;color:#3f7a9a;">立即开通</div>
<div class="t" style="left:1323.8px;top:599.0px;width:600px;text-align:center;font-size:12px;line-height:40px;color:#606469;">-</div>
<svg style="left:1698px;top:611.5px" width="18" height="17" viewBox="0 0 18 17"><path d="M11 0.8H2.2Q0.8 0.8 0.8 2.2V14.6Q0.8 16 2.2 16H14.6Q16 16 16 14.6V6" fill="none" stroke="#9aa0a6" stroke-width="1.4"/><path d="M4.5 12.5L5.5 9L13.5 1L16.3 3.8L8.3 11.8Z" fill="none" stroke="#9aa0a6" stroke-width="1.3" stroke-linejoin="round"/><path d="M12 2.5L14.8 5.3" stroke="#9aa0a6" stroke-width="1"/></svg>
<svg style="left:1745px;top:610px" width="18" height="19" viewBox="0 0 18 19"><path d="M0.5 3.5H17.5" stroke="#9aa0a6" stroke-width="1.5"/><path d="M5 3.5V1.2H12.5V3.5" fill="none" stroke="#9aa0a6" stroke-width="1.3"/><path d="M3 6V15.5Q3 17.8 5.3 17.8H12.2Q14.5 17.8 14.5 15.5V6" fill="none" stroke="#9aa0a6" stroke-width="1.5"/><path d="M6.8 6V13M10.8 6V13" stroke="#9aa0a6" stroke-width="1.3"/></svg>
<svg style="left:1792px;top:611px" width="16" height="15" viewBox="0 0 16 15"><defs><pattern id="cs619" width="4" height="2.2" patternUnits="userSpaceOnUse"><rect width="4" height="2.2" fill="#f9d45e"/><rect y="1.3" width="4" height="0.9" fill="#e9a43c"/></pattern></defs><rect x="4.5" y="0.4" width="6.4" height="11.4" rx="0.9" fill="url(#cs619)" stroke="#e6a13a" stroke-width="0.8"/><rect x="4.9" y="0.8" width="5.6" height="1.6" fill="#fdeca0"/><rect x="8.8" y="5.2" width="6.2" height="8.4" rx="0.9" fill="url(#cs619)" stroke="#e6a13a" stroke-width="0.8"/><rect x="0.4" y="3.3" width="6.4" height="10.4" rx="0.9" fill="url(#cs619)" stroke="#e6a13a" stroke-width="0.8"/><rect x="0.8" y="3.7" width="5.6" height="1.6" fill="#fdeca0"/><circle cx="12.1" cy="10.5" r="3.4" fill="#3a9e16"/><path d="M12.1 8.3V12.7M9.9 10.5H14.3" stroke="#fff" stroke-width="1.4"/></svg>
<svg style="left:1834px;top:606px" width="28" height="28" viewBox="0 0 28 28"><path d="M18.8 9V7.6Q18.8 6.2 17.4 6.2H6.8Q5.4 6.2 5.4 7.6V21.1Q5.4 22.5 6.8 22.5H17.4Q18.8 22.5 18.8 21.1V17" fill="none" stroke="#8a8a8a" stroke-width="1.3"/><path d="M8.4 5V7.9M10.6 5V7.9M13.4 5V7.9M15.7 5V7.9" stroke="#8a8a8a" stroke-width="1"/><path d="M8.5 10.4H15.3M8.5 13.1H15.8M8.5 15.5H13.7" stroke="#999" stroke-width="1"/><path d="M10.6 20.9L11.6 17.4L20.6 8.6L23.2 11.2L14.2 20Z" fill="#888"/><path d="M19.3 10L21.8 12.5" stroke="#fff" stroke-width="0.7"/><circle cx="12.3" cy="19.3" r="0.6" fill="#fff"/></svg>
<div class="r" style="left:197px;top:706px;width:1675px;height:1px;background:#dce4e6"></div>
<div class="r" style="left:209px;top:669px;width:17px;height:17px;border:1px solid #d3d9dd;border-radius:3px;background:transparent"></div>
<div class="t" style="left:-24.600000000000023px;top:657.0px;width:600px;text-align:center;font-size:14px;line-height:40px;color:#606469;">2431</div>
<div class="t" style="left:66.39999999999998px;top:657.0px;width:600px;text-align:center;font-size:14px;line-height:40px;color:#606469;">v125289</div>
<div class="t" style="left:156px;top:657.0px;width:600px;text-align:center;font-size:14px;line-height:40px;color:#606469;">学员</div>
<div class="t" style="left:237px;top:657.0px;width:600px;text-align:center;font-size:14px;line-height:40px;color:#606469;">总平台</div>
<div class="t" style="left:396px;top:657.0px;width:600px;text-align:center;font-size:14px;line-height:40px;color:#606469;"><span style="color:#008000">0</span> 元/ <span style="color:#ff0000">0.00</span> 个/<span style="color:#0000ff">0</span>分</div>
<div class="t" style="left:669.5px;top:658.0px;width:600px;text-align:center;font-size:12px;line-height:40px;color:#b5babf;">PC端</div>
<div class="t" style="left:900px;top:657.0px;width:600px;text-align:center;font-size:14px;line-height:40px;color:#008000;">正常</div>
<div class="t" style="left:1019px;top:658.0px;width:600px;text-align:center;font-size:12px;line-height:40px;color:#3f7a9a;">立即开通</div>
<div class="t" style="left:1323.8px;top:657.0px;width:600px;text-align:center;font-size:12px;line-height:40px;color:#606469;">-</div>
<svg style="left:1698px;top:669.5px" width="18" height="17" viewBox="0 0 18 17"><path d="M11 0.8H2.2Q0.8 0.8 0.8 2.2V14.6Q0.8 16 2.2 16H14.6Q16 16 16 14.6V6" fill="none" stroke="#9aa0a6" stroke-width="1.4"/><path d="M4.5 12.5L5.5 9L13.5 1L16.3 3.8L8.3 11.8Z" fill="none" stroke="#9aa0a6" stroke-width="1.3" stroke-linejoin="round"/><path d="M12 2.5L14.8 5.3" stroke="#9aa0a6" stroke-width="1"/></svg>
<svg style="left:1745px;top:668px" width="18" height="19" viewBox="0 0 18 19"><path d="M0.5 3.5H17.5" stroke="#9aa0a6" stroke-width="1.5"/><path d="M5 3.5V1.2H12.5V3.5" fill="none" stroke="#9aa0a6" stroke-width="1.3"/><path d="M3 6V15.5Q3 17.8 5.3 17.8H12.2Q14.5 17.8 14.5 15.5V6" fill="none" stroke="#9aa0a6" stroke-width="1.5"/><path d="M6.8 6V13M10.8 6V13" stroke="#9aa0a6" stroke-width="1.3"/></svg>
<svg style="left:1792px;top:669px" width="16" height="15" viewBox="0 0 16 15"><defs><pattern id="cs677" width="4" height="2.2" patternUnits="userSpaceOnUse"><rect width="4" height="2.2" fill="#f9d45e"/><rect y="1.3" width="4" height="0.9" fill="#e9a43c"/></pattern></defs><rect x="4.5" y="0.4" width="6.4" height="11.4" rx="0.9" fill="url(#cs677)" stroke="#e6a13a" stroke-width="0.8"/><rect x="4.9" y="0.8" width="5.6" height="1.6" fill="#fdeca0"/><rect x="8.8" y="5.2" width="6.2" height="8.4" rx="0.9" fill="url(#cs677)" stroke="#e6a13a" stroke-width="0.8"/><rect x="0.4" y="3.3" width="6.4" height="10.4" rx="0.9" fill="url(#cs677)" stroke="#e6a13a" stroke-width="0.8"/><rect x="0.8" y="3.7" width="5.6" height="1.6" fill="#fdeca0"/><circle cx="12.1" cy="10.5" r="3.4" fill="#3a9e16"/><path d="M12.1 8.3V12.7M9.9 10.5H14.3" stroke="#fff" stroke-width="1.4"/></svg>
<svg style="left:1834px;top:664px" width="28" height="28" viewBox="0 0 28 28"><path d="M18.8 9V7.6Q18.8 6.2 17.4 6.2H6.8Q5.4 6.2 5.4 7.6V21.1Q5.4 22.5 6.8 22.5H17.4Q18.8 22.5 18.8 21.1V17" fill="none" stroke="#8a8a8a" stroke-width="1.3"/><path d="M8.4 5V7.9M10.6 5V7.9M13.4 5V7.9M15.7 5V7.9" stroke="#8a8a8a" stroke-width="1"/><path d="M8.5 10.4H15.3M8.5 13.1H15.8M8.5 15.5H13.7" stroke="#999" stroke-width="1"/><path d="M10.6 20.9L11.6 17.4L20.6 8.6L23.2 11.2L14.2 20Z" fill="#888"/><path d="M19.3 10L21.8 12.5" stroke="#fff" stroke-width="0.7"/><circle cx="12.3" cy="19.3" r="0.6" fill="#fff"/></svg>
<div class="r" style="left:197px;top:764px;width:1675px;height:1px;background:#dce4e6"></div>
<div class="r" style="left:209px;top:727px;width:17px;height:17px;border:1px solid #d3d9dd;border-radius:3px;background:transparent"></div>
<div class="t" style="left:-24.600000000000023px;top:715.0px;width:600px;text-align:center;font-size:14px;line-height:40px;color:#606469;">2430</div>
<div class="t" style="left:66.39999999999998px;top:715.0px;width:600px;text-align:center;font-size:14px;line-height:40px;color:#606469;">v253538</div>
<div class="t" style="left:156px;top:715.0px;width:600px;text-align:center;font-size:14px;line-height:40px;color:#606469;">学员</div>
<div class="t" style="left:237px;top:715.0px;width:600px;text-align:center;font-size:14px;line-height:40px;color:#606469;">总平台</div>
<div class="t" style="left:396px;top:715.0px;width:600px;text-align:center;font-size:14px;line-height:40px;color:#606469;"><span style="color:#008000">0</span> 元/ <span style="color:#ff0000">0.00</span> 个/<span style="color:#0000ff">0</span>分</div>
<div class="t" style="left:669.5px;top:716.0px;width:600px;text-align:center;font-size:12px;line-height:40px;color:#b5babf;">PC端</div>
<div class="t" style="left:900px;top:715.0px;width:600px;text-align:center;font-size:14px;line-height:40px;color:#008000;">正常</div>
<div class="t" style="left:1019px;top:716.0px;width:600px;text-align:center;font-size:12px;line-height:40px;color:#3f7a9a;">立即开通</div>
<div class="t" style="left:1323.8px;top:715.0px;width:600px;text-align:center;font-size:12px;line-height:40px;color:#606469;">-</div>
<svg style="left:1698px;top:727.5px" width="18" height="17" viewBox="0 0 18 17"><path d="M11 0.8H2.2Q0.8 0.8 0.8 2.2V14.6Q0.8 16 2.2 16H14.6Q16 16 16 14.6V6" fill="none" stroke="#9aa0a6" stroke-width="1.4"/><path d="M4.5 12.5L5.5 9L13.5 1L16.3 3.8L8.3 11.8Z" fill="none" stroke="#9aa0a6" stroke-width="1.3" stroke-linejoin="round"/><path d="M12 2.5L14.8 5.3" stroke="#9aa0a6" stroke-width="1"/></svg>
<svg style="left:1745px;top:726px" width="18" height="19" viewBox="0 0 18 19"><path d="M0.5 3.5H17.5" stroke="#9aa0a6" stroke-width="1.5"/><path d="M5 3.5V1.2H12.5V3.5" fill="none" stroke="#9aa0a6" stroke-width="1.3"/><path d="M3 6V15.5Q3 17.8 5.3 17.8H12.2Q14.5 17.8 14.5 15.5V6" fill="none" stroke="#9aa0a6" stroke-width="1.5"/><path d="M6.8 6V13M10.8 6V13" stroke="#9aa0a6" stroke-width="1.3"/></svg>
<svg style="left:1792px;top:727px" width="16" height="15" viewBox="0 0 16 15"><defs><pattern id="cs735" width="4" height="2.2" patternUnits="userSpaceOnUse"><rect width="4" height="2.2" fill="#f9d45e"/><rect y="1.3" width="4" height="0.9" fill="#e9a43c"/></pattern></defs><rect x="4.5" y="0.4" width="6.4" height="11.4" rx="0.9" fill="url(#cs735)" stroke="#e6a13a" stroke-width="0.8"/><rect x="4.9" y="0.8" width="5.6" height="1.6" fill="#fdeca0"/><rect x="8.8" y="5.2" width="6.2" height="8.4" rx="0.9" fill="url(#cs735)" stroke="#e6a13a" stroke-width="0.8"/><rect x="0.4" y="3.3" width="6.4" height="10.4" rx="0.9" fill="url(#cs735)" stroke="#e6a13a" stroke-width="0.8"/><rect x="0.8" y="3.7" width="5.6" height="1.6" fill="#fdeca0"/><circle cx="12.1" cy="10.5" r="3.4" fill="#3a9e16"/><path d="M12.1 8.3V12.7M9.9 10.5H14.3" stroke="#fff" stroke-width="1.4"/></svg>
<svg style="left:1834px;top:722px" width="28" height="28" viewBox="0 0 28 28"><path d="M18.8 9V7.6Q18.8 6.2 17.4 6.2H6.8Q5.4 6.2 5.4 7.6V21.1Q5.4 22.5 6.8 22.5H17.4Q18.8 22.5 18.8 21.1V17" fill="none" stroke="#8a8a8a" stroke-width="1.3"/><path d="M8.4 5V7.9M10.6 5V7.9M13.4 5V7.9M15.7 5V7.9" stroke="#8a8a8a" stroke-width="1"/><path d="M8.5 10.4H15.3M8.5 13.1H15.8M8.5 15.5H13.7" stroke="#999" stroke-width="1"/><path d="M10.6 20.9L11.6 17.4L20.6 8.6L23.2 11.2L14.2 20Z" fill="#888"/><path d="M19.3 10L21.8 12.5" stroke="#fff" stroke-width="0.7"/><circle cx="12.3" cy="19.3" r="0.6" fill="#fff"/></svg>
<div class="r" style="left:197px;top:822px;width:1675px;height:1px;background:#dce4e6"></div>
<div class="r" style="left:209px;top:785px;width:17px;height:17px;border:1px solid #d3d9dd;border-radius:3px;background:transparent"></div>
<div class="t" style="left:-24.600000000000023px;top:773.0px;width:600px;text-align:center;font-size:14px;line-height:40px;color:#606469;">2429</div>
<div class="t" style="left:66.39999999999998px;top:773.0px;width:600px;text-align:center;font-size:14px;line-height:40px;color:#606469;">v749149</div>
<div class="t" style="left:156px;top:773.0px;width:600px;text-align:center;font-size:14px;line-height:40px;color:#606469;">学员</div>
<div class="t" style="left:237px;top:773.0px;width:600px;text-align:center;font-size:14px;line-height:40px;color:#606469;">总平台</div>
<div class="t" style="left:396px;top:773.0px;width:600px;text-align:center;font-size:14px;line-height:40px;color:#606469;"><span style="color:#008000">0</span> 元/ <span style="color:#ff0000">0.00</span> 个/<span style="color:#0000ff">0</span>分</div>
<div class="t" style="left:669.5px;top:774.0px;width:600px;text-align:center;font-size:12px;line-height:40px;color:#b5babf;">PC端</div>
<div class="t" style="left:900px;top:773.0px;width:600px;text-align:center;font-size:14px;line-height:40px;color:#008000;">正常</div>
<div class="t" style="left:1019px;top:774.0px;width:600px;text-align:center;font-size:12px;line-height:40px;color:#3f7a9a;">立即开通</div>
<div class="t" style="left:1323.8px;top:773.0px;width:600px;text-align:center;font-size:12px;line-height:40px;color:#606469;">-</div>
<svg style="left:1698px;top:785.5px" width="18" height="17" viewBox="0 0 18 17"><path d="M11 0.8H2.2Q0.8 0.8 0.8 2.2V14.6Q0.8 16 2.2 16H14.6Q16 16 16 14.6V6" fill="none" stroke="#9aa0a6" stroke-width="1.4"/><path d="M4.5 12.5L5.5 9L13.5 1L16.3 3.8L8.3 11.8Z" fill="none" stroke="#9aa0a6" stroke-width="1.3" stroke-linejoin="round"/><path d="M12 2.5L14.8 5.3" stroke="#9aa0a6" stroke-width="1"/></svg>
<svg style="left:1745px;top:784px" width="18" height="19" viewBox="0 0 18 19"><path d="M0.5 3.5H17.5" stroke="#9aa0a6" stroke-width="1.5"/><path d="M5 3.5V1.2H12.5V3.5" fill="none" stroke="#9aa0a6" stroke-width="1.3"/><path d="M3 6V15.5Q3 17.8 5.3 17.8H12.2Q14.5 17.8 14.5 15.5V6" fill="none" stroke="#9aa0a6" stroke-width="1.5"/><path d="M6.8 6V13M10.8 6V13" stroke="#9aa0a6" stroke-width="1.3"/></svg>
<svg style="left:1792px;top:785px" width="16" height="15" viewBox="0 0 16 15"><defs><pattern id="cs793" width="4" height="2.2" patternUnits="userSpaceOnUse"><rect width="4" height="2.2" fill="#f9d45e"/><rect y="1.3" width="4" height="0.9" fill="#e9a43c"/></pattern></defs><rect x="4.5" y="0.4" width="6.4" height="11.4" rx="0.9" fill="url(#cs793)" stroke="#e6a13a" stroke-width="0.8"/><rect x="4.9" y="0.8" width="5.6" height="1.6" fill="#fdeca0"/><rect x="8.8" y="5.2" width="6.2" height="8.4" rx="0.9" fill="url(#cs793)" stroke="#e6a13a" stroke-width="0.8"/><rect x="0.4" y="3.3" width="6.4" height="10.4" rx="0.9" fill="url(#cs793)" stroke="#e6a13a" stroke-width="0.8"/><rect x="0.8" y="3.7" width="5.6" height="1.6" fill="#fdeca0"/><circle cx="12.1" cy="10.5" r="3.4" fill="#3a9e16"/><path d="M12.1 8.3V12.7M9.9 10.5H14.3" stroke="#fff" stroke-width="1.4"/></svg>
<svg style="left:1834px;top:780px" width="28" height="28" viewBox="0 0 28 28"><path d="M18.8 9V7.6Q18.8 6.2 17.4 6.2H6.8Q5.4 6.2 5.4 7.6V21.1Q5.4 22.5 6.8 22.5H17.4Q18.8 22.5 18.8 21.1V17" fill="none" stroke="#8a8a8a" stroke-width="1.3"/><path d="M8.4 5V7.9M10.6 5V7.9M13.4 5V7.9M15.7 5V7.9" stroke="#8a8a8a" stroke-width="1"/><path d="M8.5 10.4H15.3M8.5 13.1H15.8M8.5 15.5H13.7" stroke="#999" stroke-width="1"/><path d="M10.6 20.9L11.6 17.4L20.6 8.6L23.2 11.2L14.2 20Z" fill="#888"/><path d="M19.3 10L21.8 12.5" stroke="#fff" stroke-width="0.7"/><circle cx="12.3" cy="19.3" r="0.6" fill="#fff"/></svg>
<div class="r" style="left:197px;top:880px;width:1675px;height:1px;background:#dce4e6"></div>
<div class="r" style="left:209px;top:843px;width:17px;height:17px;border:1px solid #d3d9dd;border-radius:3px;background:transparent"></div>
<div class="t" style="left:-24.600000000000023px;top:831.0px;width:600px;text-align:center;font-size:14px;line-height:40px;color:#606469;">2428</div>
<div class="t" style="left:66.39999999999998px;top:831.0px;width:600px;text-align:center;font-size:14px;line-height:40px;color:#606469;">v808911</div>
<div class="t" style="left:156px;top:831.0px;width:600px;text-align:center;font-size:14px;line-height:40px;color:#606469;">学员</div>
<div class="t" style="left:237px;top:831.0px;width:600px;text-align:center;font-size:14px;line-height:40px;color:#606469;">总平台</div>
<div class="t" style="left:396px;top:831.0px;width:600px;text-align:center;font-size:14px;line-height:40px;color:#606469;"><span style="color:#008000">0</span> 元/ <span style="color:#ff0000">0.00</span> 个/<span style="color:#0000ff">0</span>分</div>
<div class="t" style="left:669.5px;top:832.0px;width:600px;text-align:center;font-size:12px;line-height:40px;color:#b5babf;">PC端</div>
<div class="t" style="left:900px;top:831.0px;width:600px;text-align:center;font-size:14px;line-height:40px;color:#008000;">正常</div>
<div class="t" style="left:1019px;top:832.0px;width:600px;text-align:center;font-size:12px;line-height:40px;color:#3f7a9a;">立即开通</div>
<div class="t" style="left:1323.8px;top:831.0px;width:600px;text-align:center;font-size:12px;line-height:40px;color:#606469;">-</div>
<svg style="left:1698px;top:843.5px" width="18" height="17" viewBox="0 0 18 17"><path d="M11 0.8H2.2Q0.8 0.8 0.8 2.2V14.6Q0.8 16 2.2 16H14.6Q16 16 16 14.6V6" fill="none" stroke="#9aa0a6" stroke-width="1.4"/><path d="M4.5 12.5L5.5 9L13.5 1L16.3 3.8L8.3 11.8Z" fill="none" stroke="#9aa0a6" stroke-width="1.3" stroke-linejoin="round"/><path d="M12 2.5L14.8 5.3" stroke="#9aa0a6" stroke-width="1"/></svg>
<svg style="left:1745px;top:842px" width="18" height="19" viewBox="0 0 18 19"><path d="M0.5 3.5H17.5" stroke="#9aa0a6" stroke-width="1.5"/><path d="M5 3.5V1.2H12.5V3.5" fill="none" stroke="#9aa0a6" stroke-width="1.3"/><path d="M3 6V15.5Q3 17.8 5.3 17.8H12.2Q14.5 17.8 14.5 15.5V6" fill="none" stroke="#9aa0a6" stroke-width="1.5"/><path d="M6.8 6V13M10.8 6V13" stroke="#9aa0a6" stroke-width="1.3"/></svg>
<svg style="left:1792px;top:843px" width="16" height="15" viewBox="0 0 16 15"><defs><pattern id="cs851" width="4" height="2.2" patternUnits="userSpaceOnUse"><rect width="4" height="2.2" fill="#f9d45e"/><rect y="1.3" width="4" height="0.9" fill="#e9a43c"/></pattern></defs><rect x="4.5" y="0.4" width="6.4" height="11.4" rx="0.9" fill="url(#cs851)" stroke="#e6a13a" stroke-width="0.8"/><rect x="4.9" y="0.8" width="5.6" height="1.6" fill="#fdeca0"/><rect x="8.8" y="5.2" width="6.2" height="8.4" rx="0.9" fill="url(#cs851)" stroke="#e6a13a" stroke-width="0.8"/><rect x="0.4" y="3.3" width="6.4" height="10.4" rx="0.9" fill="url(#cs851)" stroke="#e6a13a" stroke-width="0.8"/><rect x="0.8" y="3.7" width="5.6" height="1.6" fill="#fdeca0"/><circle cx="12.1" cy="10.5" r="3.4" fill="#3a9e16"/><path d="M12.1 8.3V12.7M9.9 10.5H14.3" stroke="#fff" stroke-width="1.4"/></svg>
<svg style="left:1834px;top:838px" width="28" height="28" viewBox="0 0 28 28"><path d="M18.8 9V7.6Q18.8 6.2 17.4 6.2H6.8Q5.4 6.2 5.4 7.6V21.1Q5.4 22.5 6.8 22.5H17.4Q18.8 22.5 18.8 21.1V17" fill="none" stroke="#8a8a8a" stroke-width="1.3"/><path d="M8.4 5V7.9M10.6 5V7.9M13.4 5V7.9M15.7 5V7.9" stroke="#8a8a8a" stroke-width="1"/><path d="M8.5 10.4H15.3M8.5 13.1H15.8M8.5 15.5H13.7" stroke="#999" stroke-width="1"/><path d="M10.6 20.9L11.6 17.4L20.6 8.6L23.2 11.2L14.2 20Z" fill="#888"/><path d="M19.3 10L21.8 12.5" stroke="#fff" stroke-width="0.7"/><circle cx="12.3" cy="19.3" r="0.6" fill="#fff"/></svg>
<div class="r" style="left:239px;top:304px;width:80px;height:56px;border:3px solid #f20cf0"></div>
<div class="r" style="left:157px;top:885px;width:1750px;height:54px;background:#fff;border-top:1px solid #e3e8ea"></div>
<div class="r" style="left:177px;top:908px;width:17px;height:17px;border:1px solid #d3d9dd;border-radius:3px;background:transparent"></div>
<div class="t" style="left:199px;top:895.0px;font-size:14px;line-height:40px;color:#606469;">全选</div>
<div class="r" style="left:256px;top:898px;width:82px;height:32px;border:1px solid #d9e1e4;border-radius:3px;background:#fff;"></div>
<div class="t" style="left:-3.0px;top:894.5px;width:600px;text-align:center;font-size:14px;line-height:40px;color:#575b5f;">发邮件</div>
<div class="r" style="left:359px;top:898px;width:83px;height:32px;border:1px solid #d9e1e4;border-radius:3px;background:#fff;"></div>
<div class="t" style="left:100.5px;top:894.5px;width:600px;text-align:center;font-size:14px;line-height:40px;color:#575b5f;">发短信</div>
<div class="r" style="left:463px;top:898px;width:97px;height:32px;border:1px solid #d9e1e4;border-radius:3px;background:#fff;"></div>
<div class="t" style="left:211.5px;top:894.5px;width:600px;text-align:center;font-size:14px;line-height:40px;color:#575b5f;">发站内信</div>
<div class="r" style="left:581px;top:898px;width:70px;height:32px;border:1px solid #d9e1e4;border-radius:3px;background:#fff;"></div>
<div class="t" style="left:316.0px;top:894.5px;width:600px;text-align:center;font-size:14px;line-height:40px;color:#575b5f;">充值</div>
<div class="r" style="left:670px;top:898px;width:92px;height:32px;border:1px solid #d9e1e4;border-radius:3px;background:#fff;"></div>
<div class="t" style="left:416.0px;top:894.5px;width:600px;text-align:center;font-size:14px;line-height:40px;color:#575b5f;">开通VIP</div>
<div class="r" style="left:782px;top:898px;width:70px;height:32px;border:1px solid #d9e1e4;border-radius:3px;background:#fff;"></div>
<div class="t" style="left:517.0px;top:894.5px;width:600px;text-align:center;font-size:14px;line-height:40px;color:#575b5f;">打印</div>
<div class="r" style="left:872px;top:898px;width:70px;height:32px;border:1px solid #d9e1e4;border-radius:3px;background:#fff;"></div>
<div class="t" style="left:607.0px;top:894.5px;width:600px;text-align:center;font-size:14px;line-height:40px;color:#575b5f;">导出</div>
<div class="r" style="left:962px;top:898px;width:111px;height:32px;border:1px solid #d9e1e4;border-radius:3px;background:#fff;"></div>
<div class="t" style="left:717.5px;top:894.5px;width:600px;text-align:center;font-size:14px;line-height:40px;color:#575b5f;">转移业务员</div>
<div class="r" style="left:1093px;top:898px;width:129px;height:32px;border:1px solid #d9e1e4;border-radius:3px;background:#fff;"></div>
<div class="t" style="left:857.5px;top:894.5px;width:600px;text-align:center;font-size:14px;line-height:40px;color:#575b5f;">一键转入CRM</div>
<div class="t" style="left:1225px;top:893.0px;font-size:14px;line-height:40px;color:#606469;">330条</div>
<div class="r" style="left:1269px;top:898px;width:50px;height:30px;border:1px solid #e0e2e4;border-radius:3px;background:#fff;"></div>
<div class="t" style="left:994.0px;top:892.5px;width:600px;text-align:center;font-size:14px;line-height:40px;color:#ccd0d3;">首页</div>
<div class="r" style="left:1329px;top:898px;width:64px;height:30px;border:1px solid #e0e2e4;border-radius:3px;background:#fff;"></div>
<div class="t" style="left:1061.0px;top:892.5px;width:600px;text-align:center;font-size:14px;line-height:40px;color:#ccd0d3;">上一页</div>
<div class="r" style="left:1403px;top:898px;width:30px;height:30px;border:1px solid #2d9fb4;border-radius:3px;background:#fff;"></div>
<div class="t" style="left:1118.0px;top:892.5px;width:600px;text-align:center;font-size:14px;line-height:40px;color:#2d9fb4;">1</div>
<div class="r" style="left:1439px;top:898px;width:29px;height:30px;border:1px solid #cacaca;border-radius:3px;background:#fff;"></div>
<div class="t" style="left:1153.5px;top:892.5px;width:600px;text-align:center;font-size:14px;line-height:40px;color:#555;">2</div>
<div class="r" style="left:1474px;top:898px;width:30px;height:30px;border:1px solid #cacaca;border-radius:3px;background:#fff;"></div>
<div class="t" style="left:1189.0px;top:892.5px;width:600px;text-align:center;font-size:14px;line-height:40px;color:#555;">3</div>
<div class="r" style="left:1510px;top:898px;width:30px;height:30px;border:1px solid #cacaca;border-radius:3px;background:#fff;"></div>
<div class="t" style="left:1225.0px;top:892.5px;width:600px;text-align:center;font-size:14px;line-height:40px;color:#555;">4</div>
<div class="r" style="left:1546px;top:898px;width:30px;height:30px;border:1px solid #cacaca;border-radius:3px;background:#fff;"></div>
<div class="t" style="left:1261.0px;top:892.5px;width:600px;text-align:center;font-size:14px;line-height:40px;color:#555;">5</div>
<div class="r" style="left:1582px;top:898px;width:30px;height:30px;border:1px solid #cacaca;border-radius:3px;background:#fff;"></div>
<div class="t" style="left:1297.0px;top:892.5px;width:600px;text-align:center;font-size:14px;line-height:40px;color:#555;">6</div>
<div class="r" style="left:1618px;top:898px;width:29px;height:30px;border:1px solid #cacaca;border-radius:3px;background:#fff;"></div>
<div class="t" style="left:1332.5px;top:892.5px;width:600px;text-align:center;font-size:14px;line-height:40px;color:#555;">7</div>
<div class="r" style="left:1653px;top:898px;width:30px;height:30px;border:1px solid #cacaca;border-radius:3px;background:#fff;"></div>
<div class="t" style="left:1368.0px;top:892.5px;width:600px;text-align:center;font-size:14px;line-height:40px;color:#555;">8</div>
<div class="r" style="left:1689px;top:898px;width:30px;height:30px;border:1px solid #cacaca;border-radius:3px;background:#fff;"></div>
<div class="t" style="left:1404.0px;top:892.5px;width:600px;text-align:center;font-size:14px;line-height:40px;color:#555;">9</div>
<div class="r" style="left:1725px;top:898px;width:37px;height:30px;border:1px solid #cacaca;border-radius:3px;background:#fff;"></div>
<div class="t" style="left:1443.5px;top:892.5px;width:600px;text-align:center;font-size:14px;line-height:40px;color:#555;">10</div>
<div class="r" style="left:1772px;top:898px;width:64px;height:30px;border:1px solid #cacaca;border-radius:3px;background:#fff;"></div>
<div class="t" style="left:1504.0px;top:892.5px;width:600px;text-align:center;font-size:14px;line-height:40px;color:#555;">下一页</div>
<div class="r" style="left:1846px;top:898px;width:50px;height:30px;border:1px solid #cacaca;border-radius:3px;background:#fff;"></div>
<div class="t" style="left:1571.0px;top:892.5px;width:600px;text-align:center;font-size:14px;line-height:40px;color:#555;">末页</div>
<div class="r" style="left:0px;top:919px;width:638px;height:20px;background:#fbfbfb;border-top:1px solid #d6d6d6;border-right:1px solid #d6d6d6;border-top-right-radius:3px"></div>
<div class="t" style="left:4px;top:910.5px;font-size:12px;line-height:40px;color:#585858;letter-spacing:0.23px">192.168.1.10:71/space/2435</div>
<div class="r" style="left:1907px;top:54px;width:13px;height:885px;background:#eaeef6"></div>
<div class="r" style="left:1912px;top:54px;width:8px;height:240px;background:#a4a7ab;border-radius:4px"></div>
<div class="r" style="left:1910px;top:786px;width:8px;height:57px;background:#5c6066;border-radius:4px;overflow:hidden"><div style="position:absolute;left:1px;right:1px;top:27px;bottom:2px;background:repeating-linear-gradient(#3ed05a 0 1px,#5c6066 1px 2px)"></div></div>
</body></html>
